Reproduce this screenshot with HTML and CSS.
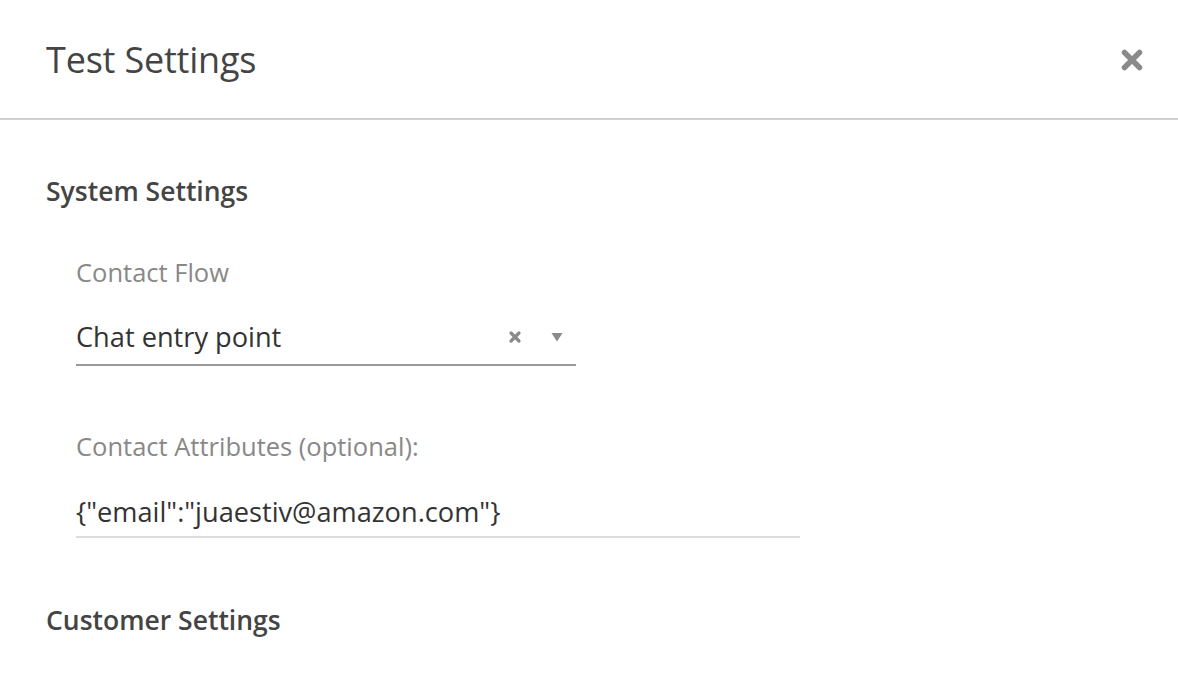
FILE: index.html
```html
<!DOCTYPE html>
<html>
<head>
<meta charset="utf-8">
<link rel="stylesheet" href="styles.css">
</head>
<body>
<div class="modal">
  <header class="modal-header">
    <h1 class="modal-title">Test Settings</h1>
    <button class="close-btn" aria-label="Close">
      <svg width="22" height="22" viewBox="0 0 22 22"><path d="M3.5 3.5 L18.5 18.5 M18.5 3.5 L3.5 18.5" stroke="#8a8a8a" stroke-width="5.5" stroke-linecap="round"/></svg>
    </button>
  </header>
  <section class="modal-body">
    <h2 class="section-title">System Settings</h2>
    <div class="field">
      <div class="field-label">Contact Flow</div>
      <div class="select">
        <span class="select-value">Chat entry point</span>
        <span class="select-icons">
          <svg class="clear-icon" width="14" height="14" viewBox="0 0 14 14"><path d="M3 3 L11 11 M11 3 L3 11" stroke="#8a8a8a" stroke-width="3.2" stroke-linecap="round"/></svg>
          <svg class="caret-icon" width="12" height="10" viewBox="0 0 12 10"><path d="M0.5 1 L11.5 1 L6 9.5 Z" fill="#8a8a8a"/></svg>
        </span>
      </div>
    </div>
    <div class="field field-attrs">
      <div class="field-label">Contact Attributes (optional):</div>
      <div class="text-input">{"email":"juaestiv@amazon.com"}</div>
    </div>
    <h2 class="section-title section-customer">Customer Settings</h2>
  </section>
</div>
</body>
</html>
```
FILE: styles.css
```css
* { box-sizing: border-box; }
html, body { margin: 0; padding: 0; background: #fff; }
body { font-family: "Open Sans", "Noto Sans", sans-serif; color: #333; width: 1178px; height: 676px; overflow: hidden; }
.modal-header {
  height: 120px;
  border-bottom: 2px solid #d0d0d0;
  display: flex;
  align-items: center;
  justify-content: space-between;
  padding: 2px 35px 0 46px;
}
.modal-title {
  margin: 0;
  font-size: 36px;
  line-height: 48px;
  font-weight: 400;
  color: #444;
  letter-spacing: -0.2px;
}
.close-btn {
  border: 0; background: none; padding: 0; display: flex;
}
.modal-body { padding: 54px 0 0 46px; }
.section-title {
  margin: 0;
  font-size: 26.5px;
  font-weight: 600;
  color: #444;
  line-height: 34px;
}
.field { padding-left: 30px; margin-top: 49px; }
.field-label { font-size: 25.5px; color: #888; line-height: 30px; }
.select {
  margin-top: 33px;
  width: 500px;
  display: flex;
  align-items: center;
  justify-content: space-between;
  border-bottom: 2px solid #999;
  padding-bottom: 10px;
}
.select-value, .text-input { font-size: 27.2px; color: #333; line-height: 34px; }
.select-icons { display: flex; align-items: center; gap: 29px; padding-right: 13px; }
.field-attrs { margin-top: 65px; }
.text-input {
  margin-top: 34px;
  width: 724px;
  border-bottom: 2px solid #ddd;
  padding-bottom: 7px;
}
.section-customer { margin-top: 65px; }
```
